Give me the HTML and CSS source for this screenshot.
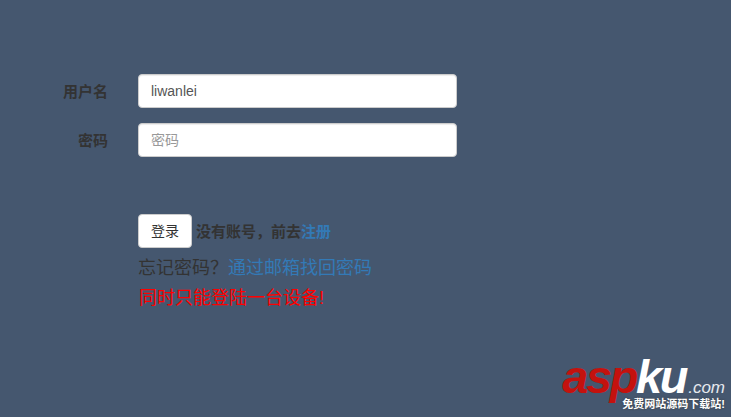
FILE: index.html
```html
<!DOCTYPE html>
<html lang="zh-CN">
<head>
    <meta charset="UTF-8">
    <meta name="viewport" content="width=device-width, initial-scale=1.0">
    <title>登录</title>
    <link rel="stylesheet" href="styles.css">
</head>
<body>
    <form class="login-form">
        <div class="form-group">
            <label class="form-label">用户名</label>
            <input class="form-control" type="text" value="liwanlei">
        </div>
        <div class="form-group">
            <label class="form-label">密码</label>
            <input class="form-control" type="password" placeholder="密码">
        </div>
        <div class="form-actions">
            <div class="submit-row">
                <button class="btn" type="button">登录</button>
                <strong class="signup-text">没有账号，前去<a href="#">注册</a></strong>
            </div>
            <div class="forgot">忘记密码？<a href="#">通过邮箱找回密码</a></div>
            <div class="notice">同时只能登陆一台设备!</div>
        </div>
    </form>

    <div class="watermark">
        <div class="watermark-logo"><span class="logo-red">asp</span><span class="logo-white">ku</span><span class="logo-com">.com</span></div>
        <div class="watermark-tag">免费网站源码下载站!</div>
    </div>
</body>
</html>
```

FILE: styles.css
```css
* {
    box-sizing: border-box;
}
html, body {
    height: 100%;
}
body {
    margin: 0;
    background-color: #45576f;
    color: #333;
    font-family: "Liberation Sans", "Noto Sans CJK SC", sans-serif;
    font-size: 14px;
    overflow: hidden;
}
a {
    color: #337ab7;
    text-decoration: none;
}
.login-form {
    padding-top: 74px;
}
.form-group {
    display: flex;
    align-items: center;
    margin-bottom: 15px;
}
.form-label {
    width: 108px;
    margin-top: -2px;
    text-align: right;
    font-size: 15px;
    font-weight: bold;
}
.form-control {
    width: 319px;
    height: 34px;
    margin-left: 30px;
    padding: 6px 12px;
    border: 1px solid #ccc;
    border-radius: 4px;
    background: #fff;
    color: #555;
    font: inherit;
    box-shadow: inset 0 1px 1px rgba(0,0,0,0.075);
}
.form-control::placeholder {
    color: #999;
    opacity: 1;
}
.form-actions {
    margin-top: 57px;
    padding-left: 138px;
}
.submit-row {
    display: flex;
    align-items: center;
    gap: 4px;
}
.btn {
    width: 54px;
    height: 34px;
    padding: 4px 12px 6px;
    border: 1px solid #ccc;
    border-radius: 4px;
    background: #fff;
    color: #333;
    font: inherit;
}
.signup-text {
    margin-top: -2px;
    font-size: 15px;
    font-weight: bold;
}
.forgot {
    margin-top: 8px;
    font-size: 18px;
    line-height: 25px;
}
.notice {
    margin-top: 5px;
    padding-left: 1px;
    font-size: 18px;
    line-height: 25px;
    color: #f00;
}
.watermark {
    position: absolute;
    right: 6px;
    bottom: 6px;
    width: 170px;
    text-align: right;
}
.watermark-logo {
    font-family: "Liberation Sans", sans-serif;
    font-style: italic;
    font-weight: bold;
    font-size: 47px;
    line-height: 40px;
    white-space: nowrap;
    letter-spacing: -2.4px;
}
.logo-red {
    color: #c4120e;
}
.logo-white {
    color: #fff;
}
.logo-com {
    margin-left: 2px;
    color: #e6e9ee;
    font-size: 17px;
    font-weight: normal;
    letter-spacing: 0;
}
.watermark-tag {
    position: relative;
    margin-top: -11px;
    color: #fff;
    font-size: 11px;
    font-weight: bold;
    line-height: 14px;
    white-space: nowrap;
    text-shadow: 0 0 2px #3a3a3a;
}
```
